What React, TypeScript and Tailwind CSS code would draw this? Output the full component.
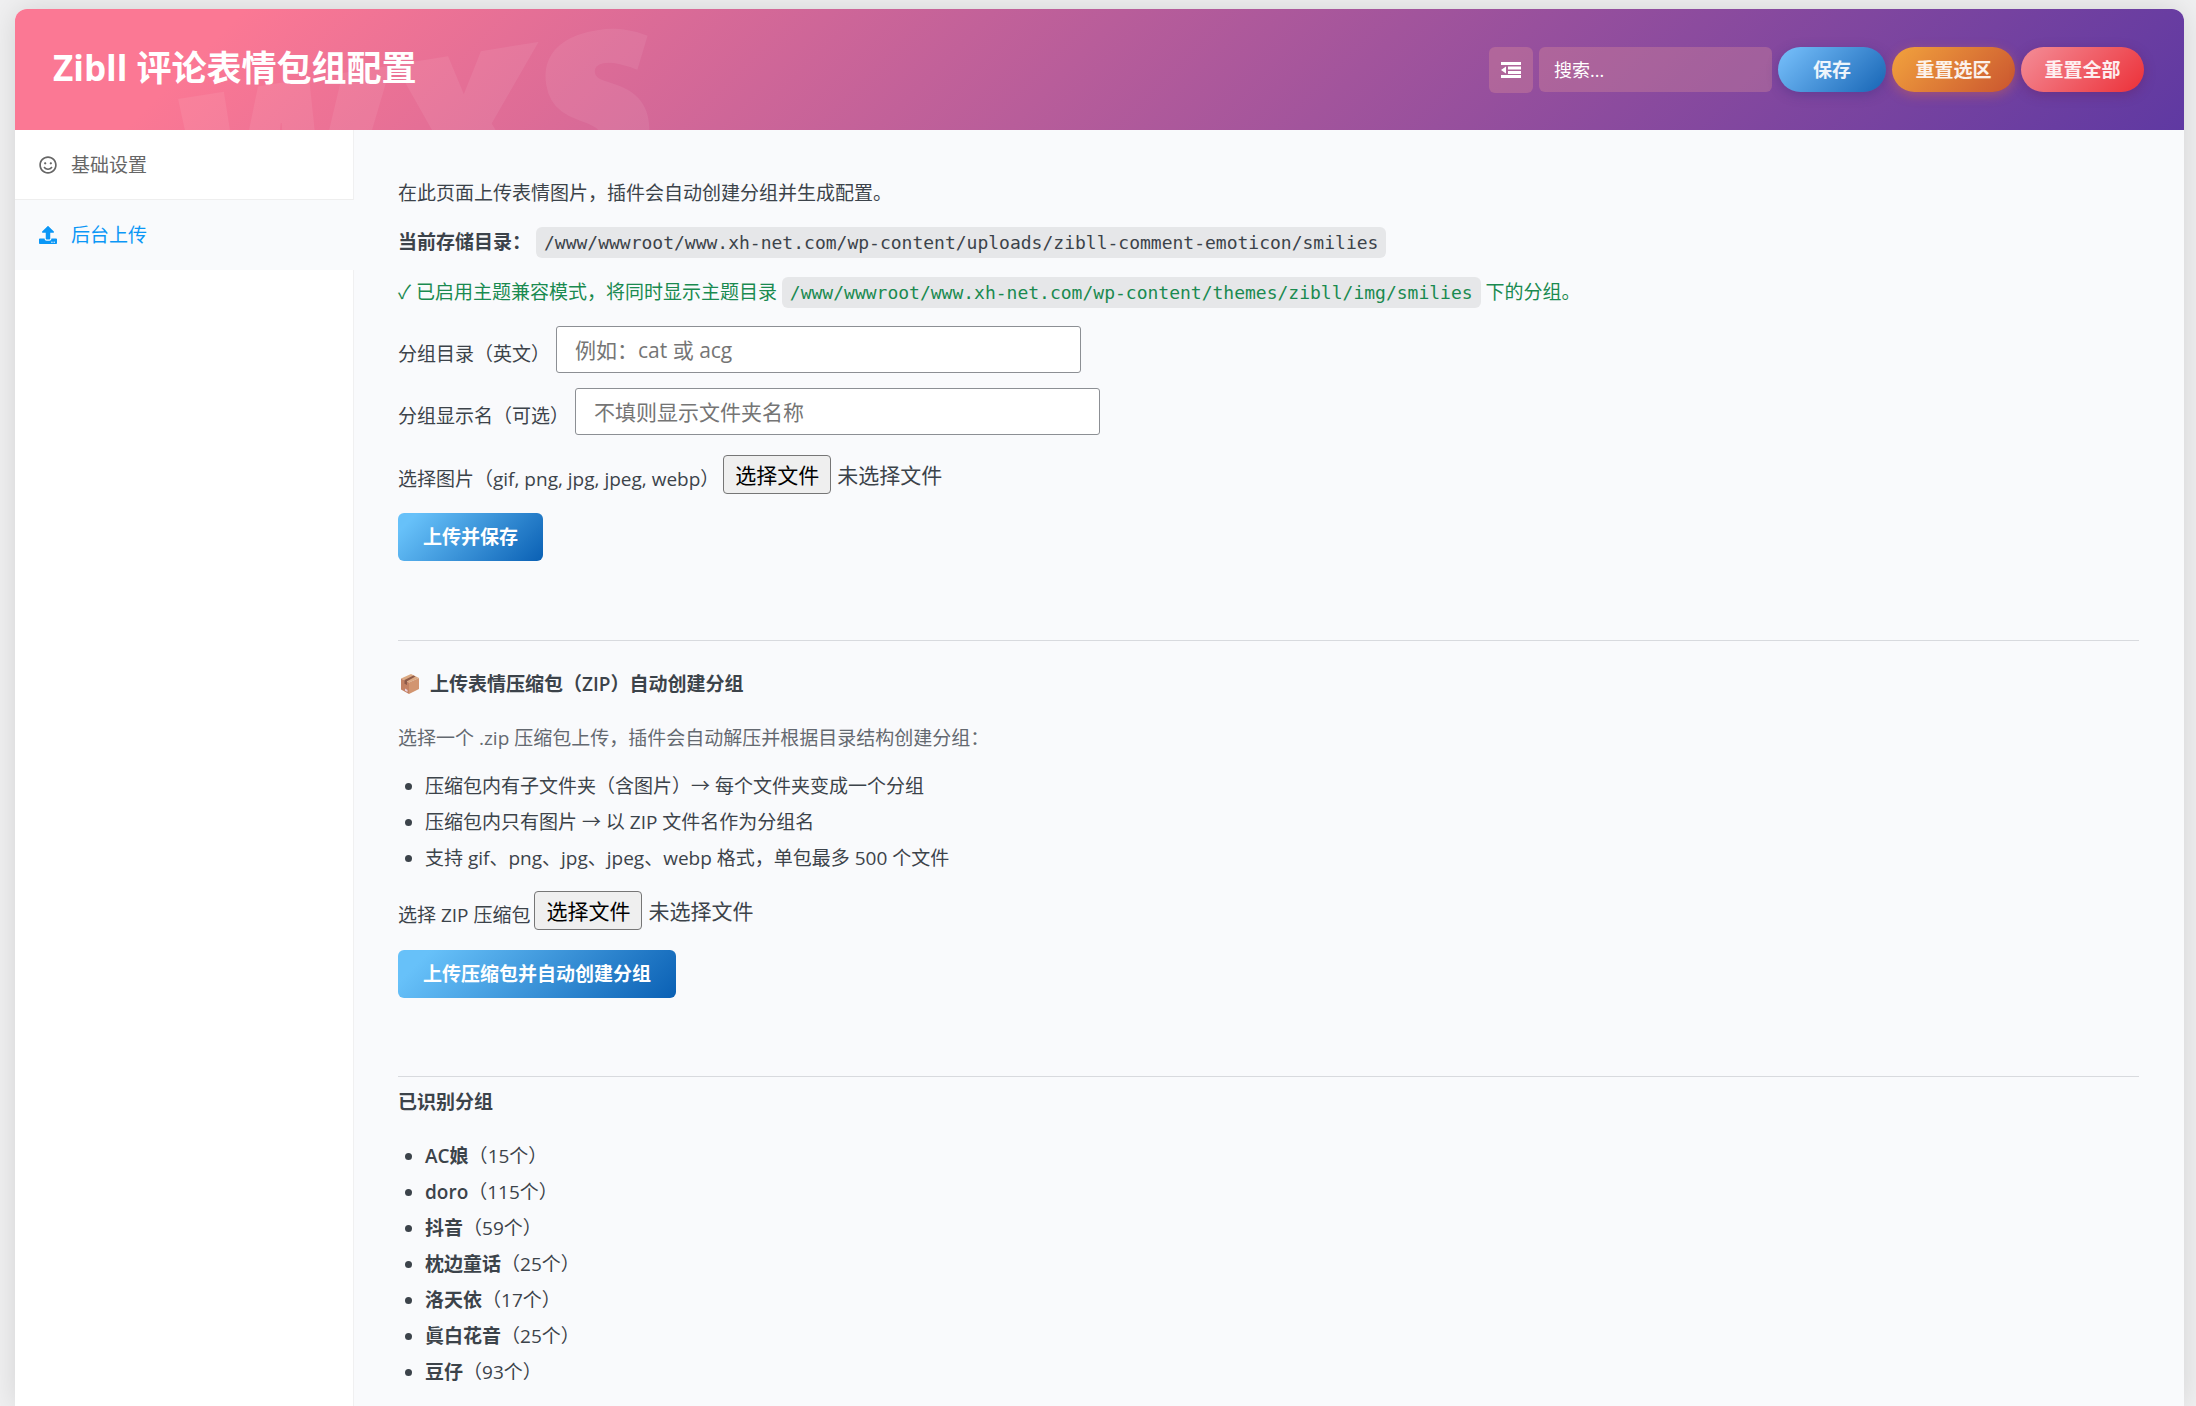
import { FaRegSmile, FaUpload } from 'react-icons/fa';

const menu = [
  { label: '基础设置', icon: FaRegSmile, active: false },
  { label: '后台上传', icon: FaUpload, active: true },
];

const zipNotes = [
  '压缩包内有子文件夹（含图片）→ 每个文件夹变成一个分组',
  '压缩包内只有图片 → 以 ZIP 文件名作为分组名',
  '支持 gif、png、jpg、jpeg、webp 格式，单包最多 500 个文件',
];

const groups = [
  { name: 'AC娘', count: 15 },
  { name: 'doro', count: 115 },
  { name: '抖音', count: 59 },
  { name: '枕边童话', count: 25 },
  { name: '洛天依', count: 17 },
  { name: '眞白花音', count: 25 },
  { name: '豆仔', count: 93 },
];

function PathCode({ children }: { children: string }) {
  return (
    <code className="rounded-md bg-[#e6e7e9] px-2 py-[5px] font-['DejaVu_Sans_Mono',monospace] text-[18px] leading-[23px]">
      {children}
    </code>
  );
}

function FileField({ id, label }: { id: string; label: string }) {
  return (
    <div className="flex items-center gap-1">
      <label htmlFor={id} className="pt-2">{label}</label>
      <div className="flex items-center gap-1.5 text-[21px]">
        <button
          type="button"
          id={id}
          className="h-[39px] w-[108px] rounded-[4px] border border-[#767676] bg-[#efefef] text-black"
        >
          选择文件
        </button>
        <span>未选择文件</span>
      </div>
    </div>
  );
}

function TextField({ id, label, placeholder }: { id: string; label: string; placeholder: string }) {
  return (
    <div className="flex items-center gap-1.5">
      <label htmlFor={id} className="pt-2">{label}</label>
      <input
        id={id}
        type="text"
        placeholder={placeholder}
        className="h-[47px] w-[525px] rounded-[3px] border border-[#8c8f94] bg-white px-[18px] text-[21px] placeholder:text-[#757575]"
      />
    </div>
  );
}

function UploadButton({ children }: { children: string }) {
  return (
    <button
      type="button"
      className="h-12 rounded-md bg-[linear-gradient(135deg,#67c1f9_10%,#0a60b4)] px-[25px] font-semibold text-white"
    >
      {children}
    </button>
  );
}

export default function App() {
  return (
    <div
      lang="zh-CN"
      className="flex min-h-screen flex-col bg-[#f0f0f1] pt-[9px] pr-3 pl-[15px] font-['Open_Sans','Noto_Sans_CJK_SC',sans-serif] text-[19px] leading-7 text-[#3c434a]"
    >
      <div className="flex grow flex-col overflow-hidden rounded-t-[12px] bg-[#f9fafc] shadow-[0_0_30px_rgba(0,0,0,0.12)]">
        {/* Header */}
        <header className="relative flex h-[121px] shrink-0 items-center justify-between overflow-hidden bg-[linear-gradient(135deg,#fb7894_10%,#5f39a2)] pr-10 pl-[38px]">
          <span
            aria-hidden="true"
            className="absolute top-[-34px] left-[154px] rotate-[-9deg] text-[260px] leading-none font-extrabold text-white/7 italic select-none"
          >
            wxs
          </span>
          <h1 className="relative pb-1 text-[35px] leading-10 font-bold text-white">Zibll 评论表情包组配置</h1>
          <div className="relative flex items-center gap-1.5">
            <button
              type="button"
              aria-label="展开全部"
              className="flex h-[46px] w-11 items-center justify-center rounded-md bg-[#fba898]/25 text-white"
            >
              <svg viewBox="0 0 20 16" className="h-4 w-5" fill="currentColor" aria-hidden="true">
                <path d="M0 0h20v3H0zM7 4.5h13v3H7zM7 9h13v3H7zM0 13h20v3H0zM5 4.5v7L0 8z" />
              </svg>
            </button>
            <input
              type="text"
              aria-label="搜索"
              placeholder="搜索..."
              className="h-[45px] w-[233px] rounded-md bg-[#fba898]/25 px-[15px] text-[18px] text-white placeholder:text-white"
            />
            <button type="button" className="h-[45px] w-[108px] rounded-full bg-[linear-gradient(135deg,#6fb8f5_10%,#1765b5)] font-semibold text-white/90 shadow-[0_3px_12px_rgba(50,40,120,0.35)]">
              保存
            </button>
            <button type="button" className="h-[45px] w-[123px] rounded-full bg-[linear-gradient(135deg,#ee9b3c_10%,#ca552f)] font-semibold text-white/90 shadow-[0_3px_12px_rgba(230,110,60,0.4)]">
              重置选区
            </button>
            <button type="button" className="h-[45px] w-[123px] rounded-full bg-[linear-gradient(135deg,#f3848e_10%,#ec3038)] font-semibold text-white/90 shadow-[0_3px_12px_rgba(100,30,90,0.4)]">
              重置全部
            </button>
          </div>
        </header>

        <div className="flex grow">
          {/* Sidebar */}
          <nav className="w-[339px] shrink-0 border-r border-[#f0f0f1] bg-white">
            {menu.map(({ label, icon: Icon, active }) => (
              <a
                key={label}
                href="#"
                className={`flex h-[70px] items-center gap-3.5 border-b pl-6 ${
                  active ? '-mr-px border-[#f9fafc] bg-[#f9fafc] text-[#0b97f6]' : 'border-[#eeeeee] text-[#666666]'
                }`}
              >
                <Icon className="size-[18px]" />
                {label}
              </a>
            ))}
          </nav>

          {/* Content */}
          <main className="grow pt-[49px] pr-[45px] pl-11">
            <p>在此页面上传表情图片，插件会自动创建分组并生成配置。</p>
            <p className="mt-[21px]">
              <strong>当前存储目录：</strong>{' '}
              <PathCode>/www/wwwroot/www.xh-net.com/wp-content/uploads/zibll-comment-emoticon/smilies</PathCode>
            </p>
            <p className="mt-[22px] text-[#1a8a50]">
              ✓ 已启用主题兼容模式，将同时显示主题目录{' '}
              <PathCode>/www/wwwroot/www.xh-net.com/wp-content/themes/zibll/img/smilies</PathCode> 下的分组。
            </p>

            <form className="mt-5">
              <TextField id="group-dir" label="分组目录（英文）" placeholder="例如：cat 或 acg" />
              <div className="mt-[15px]">
                <TextField id="group-name" label="分组显示名（可选）" placeholder="不填则显示文件夹名称" />
              </div>
              <div className="mt-5 mb-[19px]">
                <FileField id="images" label="选择图片（gif, png, jpg, jpeg, webp）" />
              </div>
              <UploadButton>上传并保存</UploadButton>
            </form>

            <hr className="mt-[79px] border-[#d8dade]" />

            <h2 className="mt-[29px] flex items-center gap-2.5 pl-0.5 font-semibold">
              <svg viewBox="0 0 20 22" className="h-[22px] w-5" aria-hidden="true">
                <path d="M11 1 19 5 9 9.5 1 5.5Z" fill="#dba983" />
                <path d="M1 5.5 9 9.5V21L1 16.5Z" fill="#c38163" />
                <path d="M19 5 9 9.5V21L19 16Z" fill="#d29570" />
                <path d="M13.5 2.5 15.5 3.5 7 8.2V12L4.5 10.7V7Z" fill="#8d5a48" />
                <path d="M5 15.5 7.5 17V19L5 17.7Z" fill="#ead2e0" />
              </svg>
              上传表情压缩包（ZIP）自动创建分组
            </h2>
            <p className="mt-[26px] text-[#646970]">选择一个 .zip 压缩包上传，插件会自动解压并根据目录结构创建分组：</p>
            <ul className="mt-4 list-disc pl-[27px] leading-9">
              {zipNotes.map((note) => (
                <li key={note}>{note}</li>
              ))}
            </ul>

            <form className="mt-[15px]">
              <FileField id="zip" label="选择 ZIP 压缩包" />
              <div className="mt-5">
                <UploadButton>上传压缩包并自动创建分组</UploadButton>
              </div>
            </form>

            <hr className="mt-[78px] border-[#d8dade]" />

            <h2 className="mt-[11px] font-semibold">已识别分组</h2>
            <ul className="mt-[22px] list-disc pl-[27px] leading-9">
              {groups.map(({ name, count }) => (
                <li key={name}>
                  <strong className="font-semibold">{name}</strong>（{count}个）
                </li>
              ))}
            </ul>
          </main>
        </div>
      </div>
    </div>
  );
}
